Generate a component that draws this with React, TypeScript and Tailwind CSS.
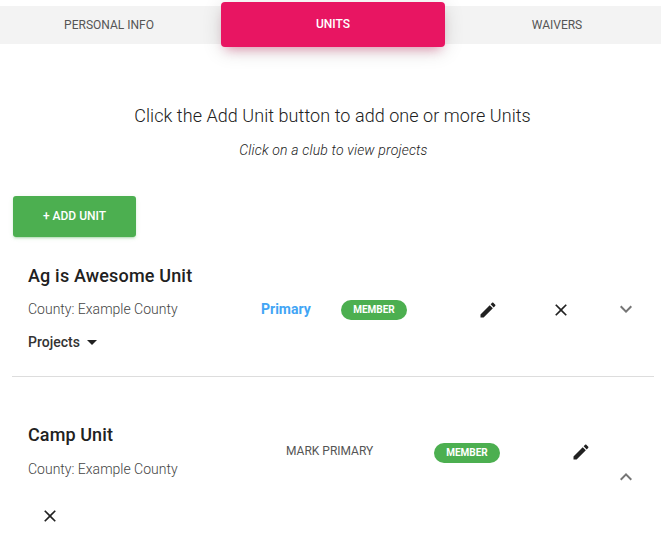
const Pencil = () => (
  <svg viewBox="0 0 24 24" className="w-[20px] h-[20px] fill-[#212121]">
    <path d="M3 17.25V21h3.75L17.81 9.94l-3.75-3.75L3 17.25zM20.71 7.04c.39-.39.39-1.02 0-1.41l-2.34-2.34c-.39-.39-1.02-.39-1.41 0l-1.83 1.83 3.75 3.75 1.83-1.83z" />
  </svg>
);
const Close = () => (
  <svg viewBox="0 0 24 24" className="w-[20px] h-[20px] fill-[#212121]">
    <path d="M19 6.41L17.59 5 12 10.59 6.41 5 5 6.41 10.59 12 5 17.59 6.41 19 12 13.41 17.59 19 19 17.59 13.41 12z" />
  </svg>
);
const Down = () => (
  <svg viewBox="0 0 24 24" className="w-[24px] h-[24px] fill-[#757575]">
    <path d="M16.59 8.59L12 13.17 7.41 8.59 6 10l6 6 6-6z" />
  </svg>
);
const Up = () => (
  <svg viewBox="0 0 24 24" className="w-[24px] h-[24px] fill-[#757575]">
    <path d="M12 8l-6 6 1.41 1.41L12 10.83l4.59 4.58L18 14z" />
  </svg>
);
const Caret = () => (
  <svg viewBox="0 0 24 24" className="w-[24px] h-[24px] fill-[#212121]">
    <path d="M7 10l5 5 5-5z" />
  </svg>
);
const Badge = () => (
  <span className="flex items-center justify-center w-[66px] h-[20px] rounded-full bg-[#4caf50] text-white text-[10px] font-bold leading-none">
    MEMBER
  </span>
);

export default function App() {
  return (
    <div className="w-[661px] h-[548px] overflow-hidden bg-white font-['Roboto',sans-serif] text-[#212121]">
      <div className="h-[47px] pt-[2px] flex">
        <div className="mt-[4px] h-[38px] pb-[1px] w-[221px] bg-[#f3f3f3] flex items-center justify-center text-[12px] text-[#555555]">
          <span className="ml-[-3px]">PERSONAL INFO</span>
        </div>
        <div className="relative w-[224px] h-[45px] pb-[1px] rounded-[4px] bg-[#e81562] flex items-center justify-center text-white text-[12px] font-medium shadow-[0_4px_20px_0_rgba(0,0,0,0.14),0_7px_10px_-5px_rgba(233,30,99,0.4)]">
          UNITS
        </div>
        <div className="mt-[4px] h-[38px] pb-[1px] w-[216px] bg-[#f3f3f3] flex items-center justify-center text-[12px] text-[#555555]">
          <span className="ml-[8px]">WAIVERS</span>
        </div>
      </div>

      <p className="mt-[55px] ml-[4px] text-center text-[18px] tracking-[0.06px] leading-[27px] font-light text-[#212121]">
        Click the Add Unit button to add one or more Units
      </p>
      <p className="mt-[11px] ml-[6px] text-center text-[14px] tracking-[0.17px] leading-[21px] font-light italic text-[#212121]">
        Click on a club to view projects
      </p>

      <button className="block mt-[35px] ml-[13px] w-[123px] h-[41px] pb-[1px] rounded-[3px] bg-[#4caf50] text-white text-[12px] font-medium shadow-[0_2px_2px_0_rgba(76,175,80,0.14),0_3px_1px_-2px_rgba(76,175,80,0.2),0_1px_5px_0_rgba(76,175,80,0.12)]">
        + ADD UNIT
      </button>

      <div className="ml-[12px] mr-[7px] mt-[25px] h-[115px] border-b border-[#dddddd] pl-[16px]">
        <h3 className="text-[18px] tracking-[0.17px] leading-[27px] font-medium">Ag is Awesome Unit</h3>
        <div className="mt-[8px] flex items-center h-[24px]">
          <span className="w-[233px] text-[14px] font-light text-[#444444]">County: Example County</span>
          <span className="w-[80px] text-[14px] font-bold text-[#42a5f5]">Primary</span>
          <span className="mt-[2px]"><Badge /></span>
          <span className="ml-[71px] mt-[2px]"><Pencil /></span>
          <span className="ml-[53px] mt-[2px]"><Close /></span>
          <span className="ml-[43px]"><Down /></span>
        </div>
        <div className="mt-[9px] flex items-center text-[14px] font-medium leading-[24px] text-[#333333]">
          Projects
          <Caret />
        </div>
      </div>

      <div className="mt-[44px] ml-[28px] flex">
        <div className="w-[258px]">
          <h3 className="text-[18px] tracking-[0.1px] leading-[27px] font-medium">Camp Unit</h3>
          <div className="mt-[9px] text-[14px] font-light leading-[24px] text-[#444444]">County: Example County</div>
          <div className="mt-[25px] ml-[12px]"><Close /></div>
        </div>
        <div className="pt-[18px] flex flex-col">
          <div className="flex items-start h-[25px]">
            <span className="w-[148px] text-[12px] leading-[24px] text-[#555555]">MARK PRIMARY</span>
            <span className="mt-[4px]"><Badge /></span>
            <span className="ml-[71px] mt-[3px]"><Pencil /></span>
          </div>
          <div className="ml-[328px] mt-[1px]"><Up /></div>
        </div>
      </div>
    </div>
  );
}
